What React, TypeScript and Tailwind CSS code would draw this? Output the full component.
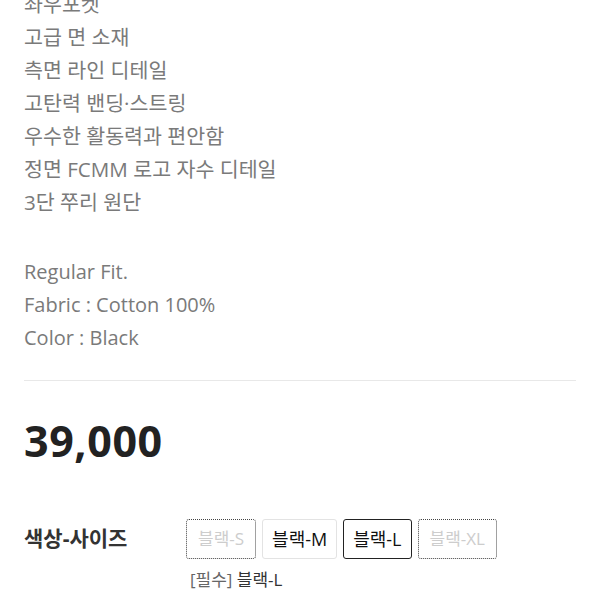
const features = [
  "좌우포켓",
  "고급 면 소재",
  "측면 라인 디테일",
  "고탄력 밴딩·스트링",
  "우수한 활동력과 편안함",
  "정면 FCMM 로고 자수 디테일",
  "3단 쭈리 원단",
];

const specs = ["Regular Fit.", "Fabric : Cotton 100%", "Color : Black"];

type Opt = { label: string; soldOut?: boolean; selected?: boolean };

const options: Opt[] = [
  { label: "블랙-S", soldOut: true },
  { label: "블랙-M" },
  { label: "블랙-L", selected: true },
  { label: "블랙-XL", soldOut: true },
];

function OptionBtn({ opt }: { opt: Opt }) {
  if (opt.soldOut) {
    return (
      <div className="h-[40px] px-[11px] flex items-center border border-dotted border-[#444] rounded-[3px] text-[17px] text-[#cdcdcd]">
        {opt.label}
      </div>
    );
  }
  return (
    <div
      className={
        opt.selected
          ? "h-[40px] px-[9px] flex items-center border border-[#222] rounded-[3px] text-[18px] text-[#111]"
          : "h-[40px] px-[9px] flex items-center border border-[#e3e3e3] rounded-[3px] text-[18px] text-[#111]"
      }
    >
      {opt.label}
    </div>
  );
}

export default function App() {
  return (
    <div className="w-[600px] h-[600px] overflow-hidden bg-white font-['Open_Sans','Noto_Sans_CJK_KR',sans-serif]">
      <div className="px-[24px] -mt-[12px]">
        <div className="text-[20.6px] leading-[33px] text-[#7a7a7a]">
          {features.map((f) => (
            <div key={f}>{f}</div>
          ))}
        </div>
        <div className="mt-[36px] text-[20px] leading-[33px] text-[#7a7a7a]">
          {specs.map((s) => (
            <div key={s}>{s}</div>
          ))}
        </div>
        <div className="mt-[26px] h-px bg-[#e8e8e8]" />
        <div className="mt-[35px] text-[43px] leading-[50px] font-bold text-[#222] tracking-[0.6px]">
          39,000
        </div>
        <div className="mt-[53px] flex">
          <div className="w-[162px] pt-[4px] text-[21px] font-bold text-[#333]">
            색상-사이즈
          </div>
          <div>
            <div className="flex gap-[6px]">
              {options.map((o) => (
                <OptionBtn key={o.label} opt={o} />
              ))}
            </div>
            <div className="mt-[8px] pl-[4px] text-[17px] text-[#333]">
              <span className="text-[#666]">[필수]</span> 블랙-L
            </div>
          </div>
        </div>
      </div>
    </div>
  );
}
